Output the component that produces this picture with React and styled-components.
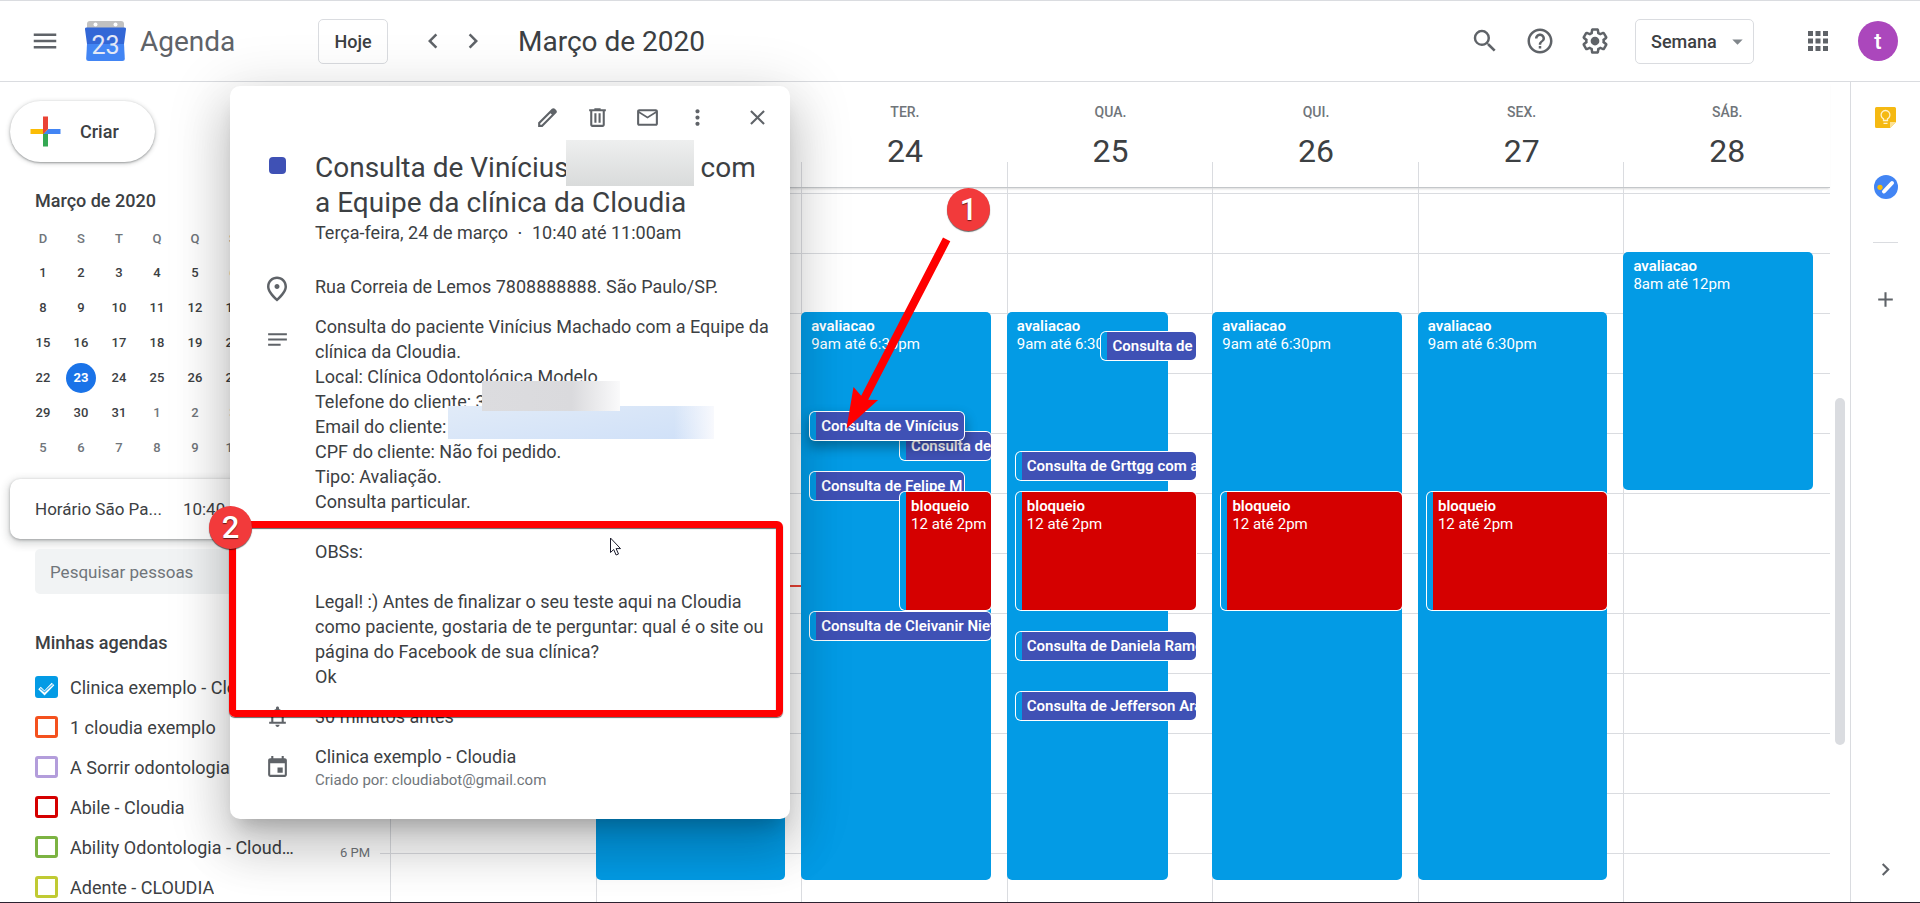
import React, { useState } from 'react';
import styled, { createGlobalStyle, css } from 'styled-components';
import {
  MdMenu,
  MdSearch,
  MdHelpOutline,
  MdApps,
  MdChevronLeft,
  MdChevronRight,
  MdArrowDropDown,
  MdMailOutline,
  MdMoreVert,
  MdClose,
  MdOutlinePlace,
  MdNotes,
  MdEvent,
  MdAdd,
} from 'react-icons/md';

const GlobalStyle = createGlobalStyle`
  * {
    box-sizing: border-box;
  }
  body {
    margin: 0;
    font-family: Roboto, Arial, sans-serif;
    color: #3c4043;
    background: #fff;
  }
  button, input, select {
    font-family: inherit;
    color: inherit;
  }
`;

const BLUE = '#039be5';
const INDIGO = '#3f51b5';
const RED = '#d50000';

// the grid is scrolled so that its first visible minute is 6:56
const FIRST_MINUTE = 6 * 60 + 56;

const Page = styled.div`
  position: relative;
  display: flex;
  flex-direction: column;
  height: 100vh;
  overflow: hidden;
  border-top: 1px solid #dadce0;
  border-bottom: 1px solid #2b2230;
`;

/* ---------- top bar ---------- */

const TopBar = styled.header`
  display: flex;
  align-items: center;
  flex: none;
  height: 81px;
  padding: 0 22px 0 30px;
  border-bottom: 1px solid #dadce0;
`;

const IconButton = styled.button`
  display: flex;
  align-items: center;
  justify-content: center;
  flex: none;
  width: 30px;
  height: 30px;
  padding: 0;
  border: 0;
  background: none;
  color: #5f6368;
  cursor: pointer;
`;

const Brand = styled.a`
  display: flex;
  align-items: center;
  gap: 14px;
  width: 233px;
  margin-left: 25px;
  color: #5f6368;
  font-size: 28px;
  text-decoration: none;
`;

const OutlineButton = styled.button`
  min-width: 70px;
  height: 45px;
  padding: 0 15px;
  border: 1px solid #dadce0;
  border-radius: 5px;
  background: none;
  font-size: 18px;
  font-weight: 500;
  cursor: pointer;
`;

const Pager = styled.div`
  display: flex;
  gap: 10px;
  margin: 0 30px;
`;

const PeriodTitle = styled.h1`
  flex: 1;
  margin: 0;
  font-size: 28px;
  font-weight: 400;
`;

const Tools = styled.div`
  display: flex;
  align-items: center;
  gap: 25px;
`;

const SelectBox = styled.div`
  position: relative;
  margin-right: 24px;

  svg {
    position: absolute;
    right: 4px;
    top: 10px;
    color: #80868b;
    pointer-events: none;
  }
`;

const ViewSelect = styled.select`
  appearance: none;
  width: 119px;
  height: 45px;
  padding: 0 15px;
  border: 1px solid #dadce0;
  border-radius: 5px;
  background: #fff;
  font-size: 18px;
  font-weight: 500;
`;

const Avatar = styled.button`
  width: 40px;
  height: 40px;
  padding: 0;
  border: 0;
  border-radius: 50%;
  background: #ab47bc;
  color: #fff;
  font-size: 22px;
  font-weight: 500;
`;

/* ---------- sidebar ---------- */

const Body = styled.div`
  display: flex;
  flex: 1;
  min-height: 0;
`;

const Sidebar = styled.aside`
  flex: none;
  width: 320px;
  padding: 19px 10px 0;
  overflow: hidden;
`;

const CreateButton = styled.button`
  display: flex;
  align-items: center;
  gap: 12px;
  height: 61px;
  padding: 0 36px 0 13px;
  border: 0;
  border-radius: 31px;
  background: #fff;
  box-shadow: 0 1px 2px rgba(60, 64, 67, 0.4), 0 1px 4px 1px rgba(60, 64, 67, 0.2);
  font-size: 18px;
  font-weight: 500;
  cursor: pointer;
`;

const SideTitle = styled.h2`
  margin: ${(p) => p.$top}px 25px ${(p) => p.$bottom}px;
  font-size: 18px;
  font-weight: 500;
  line-height: 24px;
`;

const MiniMonth = styled.table`
  table-layout: fixed;
  width: 266px;
  margin-left: 14px;
  border-collapse: collapse;
  font-size: 13px;
  text-align: center;

  th, td {
    height: 35px;
    padding: 0;
    font-weight: 500;
  }
  th {
    height: 34px;
    color: #70757a;
  }
`;

const MiniDay = styled.span`
  display: block;
  width: 30px;
  margin: 0 auto;
  border-radius: 50%;
  line-height: 30px;
  color: ${(p) => (p.$today ? '#fff' : p.$muted ? '#70757a' : '#3c4043')};
  background: ${(p) => (p.$today ? '#1a73e8' : 'none')};
  font-weight: ${(p) => (p.$today ? 700 : 500)};
`;

const ZoneCard = styled.div`
  display: flex;
  align-items: center;
  gap: 21px;
  height: 60px;
  margin: 14px 0 10px;
  padding: 0 25px;
  border-radius: 10px;
  background: #fff;
  box-shadow: 0 1px 3px rgba(60, 64, 67, 0.4), 0 3px 8px 2px rgba(60, 64, 67, 0.2);
  font-size: 17px;
`;

const PeopleInput = styled.input`
  display: block;
  width: 265px;
  height: 45px;
  margin-left: 25px;
  padding: 0 15px;
  border: 0;
  border-radius: 5px;
  background: #f1f3f4;
  font-size: 17px;

  &::placeholder {
    color: #70757a;
    opacity: 1;
  }
`;

const CalendarList = styled.ul`
  margin: 0 10px 0 25px;
  padding: 0;
  list-style: none;
`;

const CalendarLabel = styled.label`
  display: flex;
  align-items: center;
  gap: 12px;
  height: 40px;
  font-size: 18px;
`;

const CheckBox = styled.span`
  display: grid;
  flex: none;

  input, svg {
    grid-area: 1 / 1;
    width: 23px;
    height: 22px;
  }
  svg {
    pointer-events: none;
  }
  input {
    appearance: none;
    margin: 0;
    border: 3px solid ${(p) => p.$color};
    border-radius: 3px;
  }
  input:checked {
    background: ${(p) => p.$color};
  }
`;

const CalendarName = styled.span`
  max-width: 224px;
  overflow: hidden;
  text-overflow: ellipsis;
  white-space: nowrap;
`;

/* ---------- week grid ---------- */

const Main = styled.main`
  display: flex;
  flex-direction: column;
  flex: 1;
  min-width: 0;
`;

const DayHeads = styled.div`
  display: grid;
  grid-template-columns: repeat(7, 1fr);
  flex: none;
  height: 106px;
  margin: 0 20px 0 70px;
  padding-right: 1px;
  border-bottom: 1px solid #c4c7ca;
  box-shadow: 0 2px 2px -1px rgba(0, 0, 0, 0.15);
`;

const DayHead = styled.div`
  display: flex;
  flex-direction: column;
  align-items: center;
  padding: 21px 0 0 2px;
  background: linear-gradient(#dadce0, #dadce0) left bottom / 1px 25px no-repeat;
`;

const DayName = styled.div`
  color: #70757a;
  font-size: 14px;
  font-weight: 500;
  line-height: 18px;
`;

const DayNumber = styled.div`
  margin-top: 10px;
  font-size: 32px;
  line-height: 40px;
`;

const WeekScroll = styled.div`
  display: flex;
  flex: 1;
  min-height: 0;
  overflow: hidden;
`;

const Hours = styled.div`
  flex: none;
  width: 60px;
  padding: 35px 10px 0 0;
  color: #70757a;
  font-size: 13px;
  line-height: 60px;
  text-align: right;
`;

const Hour = styled.div`
  height: 60px;
`;

const Days = styled.div`
  display: grid;
  grid-template-columns: repeat(7, 1fr);
  flex: 1;
  padding: 0 1px 0 10px;
  background: linear-gradient(#dadce0 1px, transparent 1px) 0 5px / 100% 60px;
`;

const Day = styled.div`
  position: relative;
  border-left: 1px solid #dadce0;
`;

const Lane = styled.div`
  position: absolute;
  inset: 0 16px 0 -1px;
`;

const Event = styled.div`
  position: absolute;
  overflow: hidden;
  padding: 5px 0 0 10px;
  border-radius: 5px;
  background: ${(p) => p.$color};
  color: #fff;
  font-size: 15px;
  line-height: 18px;
  white-space: nowrap;

  ${(p) =>
    p.$nested &&
    css`
      padding-left: 5px;
      border-left: 6px solid ${BLUE};
      box-shadow: 0 0 0 1px #fff;
    `}
  ${(p) =>
    p.$active &&
    css`
      z-index: 1;
      box-shadow: 0 0 0 1px #fff, 0 6px 12px 2px rgba(0, 0, 0, 0.3);
    `}
`;

const EventName = styled.div`
  font-weight: 600;
`;

const NowLine = styled.div`
  position: absolute;
  left: 0;
  right: 0;
  height: 2px;
  background: #ea4335;
`;

const ScrollTrack = styled.div`
  flex: none;
  width: 20px;
  padding: 210px 5px 0;
`;

const ScrollThumb = styled.div`
  width: 10px;
  height: 347px;
  border-radius: 5px;
  background: #dadce0;
`;

/* ---------- side panel ---------- */

const SidePanel = styled.nav`
  display: flex;
  flex-direction: column;
  align-items: center;
  flex: none;
  width: 70px;
  padding: 20px 0 18px;
  border-left: 1px solid #dadce0;

  button:last-child {
    margin-top: auto;
  }
`;

const PanelButton = styled(IconButton)`
  margin-bottom: 40px;
`;

const PanelRule = styled.div`
  width: 25px;
  height: 1px;
  margin-bottom: 41px;
  background: #dadce0;
`;

/* ---------- event pop-up ---------- */

const Popup = styled.section`
  position: absolute;
  z-index: 2;
  left: 230px;
  top: 85px;
  width: 560px;
  padding: 11px 18px 28px 0;
  border-radius: 10px;
  background: #fff;
  box-shadow: 0 30px 48px 4px rgba(0, 0, 0, 0.14), 0 11px 58px 10px rgba(0, 0, 0, 0.12),
    0 14px 19px -9px rgba(0, 0, 0, 0.2);
  font-size: 18px;
  line-height: 25px;
`;

const PopupTools = styled.div`
  display: flex;
  align-items: center;
  justify-content: flex-end;
  gap: 20px;
  height: 40px;

  button:last-child {
    margin-left: 10px;
  }
`;

const PopupRow = styled.div`
  display: grid;
  grid-template-columns: 30px 1fr;
  column-gap: 23px;
  margin-top: ${(p) => p.$top}px;
  padding-left: 32px;

  > svg {
    justify-self: center;
    align-self: ${(p) => (p.$iconAlign ? p.$iconAlign : 'center')};
    color: #5f6368;
  }
`;

const ColorChip = styled.span`
  justify-self: center;
  width: 17px;
  height: 17px;
  margin-top: 7px;
  border-radius: 4px;
  background: ${INDIGO};
`;

const PopupTitle = styled.h2`
  margin: 0;
  font-size: 28px;
  font-weight: 400;
  line-height: 35px;
  white-space: nowrap;
`;

const TitleMask = styled.span`
  display: inline-block;
  width: 128px;
  height: 46px;
  margin: -17px 0 -3px -3px;
  vertical-align: middle;
  background: linear-gradient(#eeefef, #d9dbdb);
`;

const When = styled.p`
  margin: 0;
`;

const Notes = styled.div`
  position: relative;
  white-space: pre-line;
`;

const PhoneMask = styled.span`
  position: absolute;
  z-index: 1;
  left: 167px;
  top: 67px;
  width: 138px;
  height: 30px;
  background: linear-gradient(90deg, #dcdcdf 0, #dadadd 65%, #fafafb 100%);
`;

const EmailMask = styled.span`
  position: absolute;
  left: 133px;
  top: 92px;
  width: 266px;
  height: 33px;
  background: linear-gradient(90deg, transparent 85%, #f8f9fd), linear-gradient(170deg, #e1ebf8, #cfe0f8);
`;

const NotesIcon = styled(MdNotes)`
  margin-top: 13px;
`;

const Author = styled.div`
  color: #70757a;
  font-size: 15px;
  line-height: 22px;
`;

/* ---------- tutorial marks over the page ---------- */

const Mark = styled.div`
  position: absolute;
  z-index: 3;
  left: ${(p) => p.$x}px;
  top: ${(p) => p.$y}px;
  pointer-events: none;
`;

const Step = styled(Mark)`
  width: 43px;
  height: 43px;
  border-radius: 50%;
  background: #f23a3b;
  box-shadow: 0 1px 1px rgba(0, 0, 0, 0.6);
  color: #fff;
  font-size: 31px;
  font-weight: 500;
  line-height: 43px;
  text-align: center;
  text-shadow: 0 1px 1px rgba(0, 0, 0, 0.6);
`;

const Frame = styled(Mark)`
  width: 554px;
  height: 196px;
  border: 7px solid #f00;
  border-radius: 6px;
  box-shadow: 0 1px 1px rgba(0, 0, 0, 0.6), inset 0 1px 1px rgba(0, 0, 0, 0.6);
`;

/* ---------- drawings ---------- */

const Glyph = ({ d, size = 25, children }) => (
  <svg width={size} height={size} viewBox="0 0 24 24" fill="currentColor" aria-hidden="true">
    <path d={d} />
    {children}
  </svg>
);

const ICONS = {
  edit: 'M20.41 4.94l-1.35-1.35c-.78-.78-2.05-.78-2.83 0L3 16.82V21h4.18L20.41 7.77c.79-.78.79-2.05 0-2.83zM6.41 19.06L5 19v-1.36l9.82-9.82 1.41 1.41-9.82 9.83z',
  trash:
    'M15 4V3H9v1H4v2h1v13c0 1.1.9 2 2 2h10c1.1 0 2-.9 2-2V6h1V4h-5zm2 15H7V6h10v13zM9 8h2v9H9zm4 0h2v9h-2z',
  bell: 'M18 17v-6c0-3.07-1.63-5.64-4.5-6.32V4c0-.83-.67-1.5-1.5-1.5s-1.5.67-1.5 1.5v.68C7.64 5.36 6 7.92 6 11v6H4v2h16v-2h-2zm-2 0H8v-6c0-2.48 1.51-4.5 4-4.5s4 2.02 4 4.5v6zM12 22c1.1 0 2-.9 2-2h-4c0 1.1.9 2 2 2z',
  settings:
    'M13.85 22.25h-3.7c-.74 0-1.36-.54-1.45-1.27l-.27-1.89c-.27-.14-.53-.29-.79-.46l-1.8.72c-.7.26-1.47-.03-1.81-.65L2.2 15.53c-.35-.66-.2-1.44.36-1.88l1.53-1.19c-.01-.15-.02-.3-.02-.46 0-.15.01-.31.02-.46l-1.52-1.19c-.59-.45-.74-1.26-.37-1.88l1.85-3.19c.34-.62 1.11-.9 1.79-.63l1.81.73c.26-.17.52-.32.78-.46l.27-1.91c.09-.7.71-1.25 1.44-1.25h3.7c.74 0 1.36.54 1.45 1.27l.27 1.89c.27.14.53.29.79.46l1.8-.72c.71-.26 1.48.03 1.82.65l1.84 3.18c.36.66.2 1.44-.36 1.88l-1.52 1.19c.01.15.02.3.02.46s-.01.31-.02.46l1.52 1.19c.56.45.72 1.23.37 1.86l-1.86 3.22c-.34.62-1.11.9-1.8.63l-1.8-.72c-.26.17-.52.32-.78.46l-.27 1.91c-.1.68-.72 1.22-1.46 1.22zm-3.23-2h2.76l.37-2.55.53-.22c.44-.18.88-.44 1.34-.78l.45-.34 2.38.96 1.38-2.4-2.03-1.58.07-.56c.03-.26.06-.51.06-.78s-.03-.53-.06-.78l-.07-.56 2.03-1.58-1.39-2.4-2.39.96-.45-.35c-.42-.32-.87-.58-1.33-.77l-.52-.22-.37-2.55h-2.76l-.37 2.55-.53.21c-.44.19-.88.44-1.34.79l-.45.33-2.38-.95-1.39 2.39 2.03 1.58-.07.56a7 7 0 0 0-.06.79c0 .26.02.53.06.78l.07.56-2.03 1.58 1.38 2.4 2.39-.96.45.35c.43.33.86.58 1.33.77l.53.22.38 2.55z',
};

const Logo = () => (
  <svg width="41" height="41" viewBox="0 0 41 41" aria-hidden="true">
    <path d="M5 0h31a3 3 0 0 1 3 3v6H2V3a3 3 0 0 1 3-3z" fill="#c1c1c1" />
    <circle cx="10.500" cy="3.500" r="2" fill="#fff" />
    <circle cx="30.500" cy="3.500" r="2" fill="#fff" />
    <path d="M1.500 6.500h38a1.500 1.500 0 0 1 1.500 1.700L39 23H2L0 8.200a1.500 1.500 0 0 1 1.500-1.700z" fill="#3367d6" />
    <path d="M2 23h37l.8 14.500a2.500 2.500 0 0 1-2.500 2.500H3.700a2.500 2.500 0 0 1-2.500-2.500z" fill="#4285f4" />
    <text x="20.500" y="32.500" textAnchor="middle" fontFamily="Roboto, sans-serif" fontSize="25" fill="#e3e8f6">
      23
    </text>
  </svg>
);

const PlusLogo = () => (
  <svg width="45" height="45" viewBox="0 0 36 36" aria-hidden="true">
    <path fill="#34A853" d="M16 16v14h4V20z" />
    <path fill="#4285F4" d="M30 16H20l-4 4h14z" />
    <path fill="#FBBC05" d="M6 16v4h10l4-4z" />
    <path fill="#EA4335" d="M20 16V6h-4v14z" />
  </svg>
);

const KeepLogo = () => (
  <svg width="21" height="21" viewBox="0 0 21 21" aria-hidden="true">
    <path d="M1.500 0h18A1.500 1.500 0 0 1 21 1.500V15l-6 6H1.500A1.500 1.500 0 0 1 0 19.500v-18A1.500 1.500 0 0 1 1.500 0z" fill="#f5b912" />
    <path d="M21 15h-6v6z" fill="#fde293" />
    <path d="M8.500 13.500v-1.700a4.400 4.400 0 1 1 4 0v1.700zM8.500 16.300h4" fill="none" stroke="#fff3cf" strokeWidth="1.300" />
  </svg>
);

const TasksLogo = () => (
  <svg width="24" height="24" viewBox="0 0 24 24" aria-hidden="true">
    <circle cx="12" cy="12" r="12" fill="#4285f4" />
    <path d="M10 16.500l8-8.500" stroke="#fff" strokeWidth="4" strokeLinecap="round" />
    <circle cx="6" cy="12.300" r="2.600" fill="#fbbc04" />
  </svg>
);

const Tick = () => (
  <svg viewBox="0 0 23 22" fill="none" aria-hidden="true">
    <path d="M4.500 12l5 5L18 8" stroke="#fff" strokeWidth="3.600" />
    <path d="M5.200 12.600l4.300 3.300L17.600 8.500" stroke="#4db8ee" strokeWidth="1.300" />
  </svg>
);

const Arrow = () => (
  <svg width="112" height="200" viewBox="0 0 112 200" aria-hidden="true">
    <path d="M103 2.500l7.300 3.800L28.200 164.800l9.900.2L6.500 193.500l7-41.500 7.700 8.800z" fill="#f00" />
  </svg>
);

const Pointer = () => (
  <svg width="14" height="21" viewBox="0 0 14 21" aria-hidden="true">
    <path d="M1.500 2v14.500l3.200-3 2.400 5.500 2.400-1-2.400-5.400h4.400z" fill="#fff" stroke="#1b1b2b" />
  </svg>
);

/* ---------- data ---------- */

const WEEKDAYS = ['D', 'S', 'T', 'Q', 'Q', 'S', 'S'];

const MONTH = [
  [1, 2, 3, 4, 5, 6, 7],
  [8, 9, 10, 11, 12, 13, 14],
  [15, 16, 17, 18, 19, 20, 21],
  [22, 23, 24, 25, 26, 27, 28],
  [29, 30, 31, 1, 2, 3, 4],
  [5, 6, 7, 8, 9, 10, 11],
];

const CALENDARS = [
  { name: 'Clinica exemplo - Cloudia', color: BLUE, checked: true },
  { name: '1 cloudia exemplo', color: '#f4511e' },
  { name: 'A Sorrir odontologia - Cloudia', color: '#b39ddb' },
  { name: 'Abile - Cloudia', color: RED },
  { name: 'Ability Odontologia - Cloudia', color: '#7cb342' },
  { name: 'Adente - CLOUDIA', color: '#c0ca33' },
];

const HOURS = ['8 AM', '9 AM', '10 AM', '11 AM', '12 PM', '1 PM', '2 PM', '3 PM', '4 PM', '5 PM', '6 PM'];

const at = (h, m = 0) => h * 60 + m;

// left and width are percentages of the day's lane
const work = { name: 'avaliacao', time: '9am até 6:30pm', start: at(9), length: 570, color: BLUE };
const block = { name: 'bloqueio', time: '12 até 2pm', start: at(12), length: 120, color: RED, left: 4.8, width: 95.2 };
const visit = (name, start, rest) => ({ name, start, length: 30, color: INDIGO, left: 4.8, width: 95.2, ...rest });

const DAYS = [
  { name: 'DOM.', number: 22, events: [] },
  { name: 'SEG.', number: 23, events: [work], now: at(13, 33) },
  {
    name: 'TER.',
    number: 24,
    events: [
      work,
      visit('Consulta de Vinícius', at(10, 40), { width: 81.2, active: true }),
      visit('Consulta de', at(11), { left: 52.2, width: 47.8 }),
      visit('Consulta de Felipe M', at(11, 40), { width: 81.2 }),
      { ...block, left: 52.2, width: 47.8 },
      visit('Consulta de Cleivanir Nieto', at(14)),
    ],
  },
  {
    name: 'QUA.',
    number: 25,
    events: [
      { ...work, width: 85 },
      visit('Consulta de', at(9, 20), { left: 50, width: 50 }),
      visit('Consulta de Grttgg com a Equipe', at(11, 20)),
      block,
      visit('Consulta de Daniela Ramos', at(14, 20)),
      visit('Consulta de Jefferson Araujo', at(15, 20)),
    ],
  },
  { name: 'QUI.', number: 26, events: [work, block] },
  { name: 'SEX.', number: 27, events: [work, block] },
  {
    name: 'SÁB.',
    number: 28,
    events: [{ name: 'avaliacao', time: '8am até 12pm', start: at(8), length: 240, color: BLUE }],
  },
];

const NOTES = `Consulta do paciente Vinícius Machado com a Equipe da
clínica da Cloudia.
Local: Clínica Odontológica Modelo
Telefone do cliente: 3
Email do cliente:
CPF do cliente: Não foi pedido.
Tipo: Avaliação.
Consulta particular.

OBSs:

Legal! :) Antes de finalizar o seu teste aqui na Cloudia
como paciente, gostaria de te perguntar: qual é o site ou
página do Facebook de sua clínica?
Ok`;

/* ---------- components ---------- */

const CalendarItem = ({ calendar }) => {
  const [checked, setChecked] = useState(!!calendar.checked);

  return (
    <li>
      <CalendarLabel>
        <CheckBox $color={calendar.color}>
          <input type="checkbox" checked={checked} onChange={(e) => setChecked(e.target.checked)} />
          {checked && <Tick />}
        </CheckBox>
        <CalendarName>{calendar.name}</CalendarName>
      </CalendarLabel>
    </li>
  );
};

const EventBox = ({ event }) => (
  <Event
    $color={event.color}
    $nested={!!event.left}
    $active={event.active}
    style={{
      top: event.start - FIRST_MINUTE,
      height: event.length - 2,
      left: `${event.left || 0}%`,
      width: `${event.width || 100}%`,
    }}
  >
    <EventName>{event.name}</EventName>
    {event.time && <div>{event.time}</div>}
  </Event>
);

const EventPopup = () => (
  <Popup role="dialog" aria-label="Detalhes do evento">
    <PopupTools>
      <IconButton aria-label="Editar"><Glyph d={ICONS.edit} /></IconButton>
      <IconButton aria-label="Excluir"><Glyph d={ICONS.trash} /></IconButton>
      <IconButton aria-label="Enviar e-mail"><MdMailOutline size={25} /></IconButton>
      <IconButton aria-label="Opções"><MdMoreVert size={25} /></IconButton>
      <IconButton aria-label="Fechar"><MdClose size={25} /></IconButton>
    </PopupTools>
    <PopupRow $top={13}>
      <ColorChip />
      <div>
        <PopupTitle>
          Consulta de Vinícius<TitleMask /> com
          <br />
          a Equipe da clínica da Cloudia
        </PopupTitle>
        <When>Terça-feira, 24 de março &nbsp;⋅&nbsp; 10:40 até 11:00am</When>
      </div>
    </PopupRow>
    <PopupRow $top={29}>
      <MdOutlinePlace size={30} />
      <div>Rua Correia de Lemos 7808888888. São Paulo/SP.</div>
    </PopupRow>
    <PopupRow $top={10} $iconAlign="start">
      <NotesIcon size={25} />
      <Notes>
        {NOTES}
        <PhoneMask />
        <EmailMask />
      </Notes>
    </PopupRow>
    <PopupRow $top={15}>
      <Glyph d={ICONS.bell} />
      <div>30 minutos antes</div>
    </PopupRow>
    <PopupRow $top={15}>
      <MdEvent size={25} />
      <div>
        Clinica exemplo - Cloudia
        <Author>Criado por: cloudiabot@gmail.com</Author>
      </div>
    </PopupRow>
  </Popup>
);

const App = () => {
  const [view, setView] = useState('Semana');

  return (
    <Page>
      <GlobalStyle />
      <TopBar>
        <IconButton aria-label="Menu principal"><MdMenu size={30} /></IconButton>
        <Brand href="#"><Logo />Agenda</Brand>
        <OutlineButton>Hoje</OutlineButton>
        <Pager>
          <IconButton aria-label="Semana anterior"><MdChevronLeft size={30} /></IconButton>
          <IconButton aria-label="Próxima semana"><MdChevronRight size={30} /></IconButton>
        </Pager>
        <PeriodTitle>Março de 2020</PeriodTitle>
        <Tools>
          <IconButton aria-label="Pesquisar"><MdSearch size={30} /></IconButton>
          <IconButton aria-label="Ajuda"><MdHelpOutline size={30} /></IconButton>
          <IconButton aria-label="Configurações">
            <Glyph d={ICONS.settings} size={30}>
              <circle cx="12" cy="12" r="3.500" />
            </Glyph>
          </IconButton>
          <SelectBox>
            <ViewSelect aria-label="Visualização" value={view} onChange={(e) => setView(e.target.value)}>
              <option>Dia</option>
              <option>Semana</option>
              <option>Mês</option>
            </ViewSelect>
            <MdArrowDropDown size={25} />
          </SelectBox>
          <IconButton aria-label="Google Apps"><MdApps size={30} /></IconButton>
          <Avatar aria-label="Conta">t</Avatar>
        </Tools>
      </TopBar>

      <Body>
        <Sidebar>
          <CreateButton><PlusLogo />Criar</CreateButton>
          <SideTitle $top={27} $bottom={8}>Março de 2020</SideTitle>
          <MiniMonth>
            <thead>
              <tr>
                {WEEKDAYS.map((day, i) => (
                  <th key={i}>{day}</th>
                ))}
              </tr>
            </thead>
            <tbody>
              {MONTH.map((week, row) => (
                <tr key={row}>
                  {week.map((day) => (
                    <td key={day}>
                      <MiniDay $today={row === 3 && day === 23} $muted={row > 3 && day < 20}>{day}</MiniDay>
                    </td>
                  ))}
                </tr>
              ))}
            </tbody>
          </MiniMonth>
          <ZoneCard>
            <span>Horário São Pa...</span>
            <span>10:40</span>
          </ZoneCard>
          <PeopleInput placeholder="Pesquisar pessoas" aria-label="Pesquisar pessoas" />
          <SideTitle $top={37} $bottom={12}>Minhas agendas</SideTitle>
          <CalendarList>
            {CALENDARS.map((calendar) => (
              <CalendarItem key={calendar.name} calendar={calendar} />
            ))}
          </CalendarList>
        </Sidebar>

        <Main>
          <DayHeads>
            {DAYS.map((day) => (
              <DayHead key={day.name}>
                <DayName>{day.name}</DayName>
                <DayNumber>{day.number}</DayNumber>
              </DayHead>
            ))}
          </DayHeads>
          <WeekScroll>
            <Hours>
              {HOURS.map((hour) => (
                <Hour key={hour}>{hour}</Hour>
              ))}
            </Hours>
            <Days>
              {DAYS.map((day) => (
                <Day key={day.name}>
                  <Lane>
                    {day.events.map((event) => (
                      <EventBox key={event.start + event.name} event={event} />
                    ))}
                  </Lane>
                  {day.now && <NowLine style={{ top: day.now - FIRST_MINUTE }} />}
                </Day>
              ))}
            </Days>
            <ScrollTrack>
              <ScrollThumb />
            </ScrollTrack>
          </WeekScroll>
        </Main>

        <SidePanel>
          <PanelButton aria-label="Keep"><KeepLogo /></PanelButton>
          <PanelButton aria-label="Tarefas"><TasksLogo /></PanelButton>
          <PanelRule />
          <PanelButton aria-label="Instalar complementos"><MdAdd size={25} /></PanelButton>
          <IconButton aria-label="Ocultar painel"><MdChevronRight size={25} /></IconButton>
        </SidePanel>
      </Body>

      <EventPopup />

      <Mark $x={840} $y={234}><Arrow /></Mark>
      <Step $x={947} $y={187}>1</Step>
      <Frame $x={229} $y={520} />
      <Step $x={209} $y={505}>2</Step>
      <Mark $x={609} $y={535}><Pointer /></Mark>
    </Page>
  );
};

export default App;
